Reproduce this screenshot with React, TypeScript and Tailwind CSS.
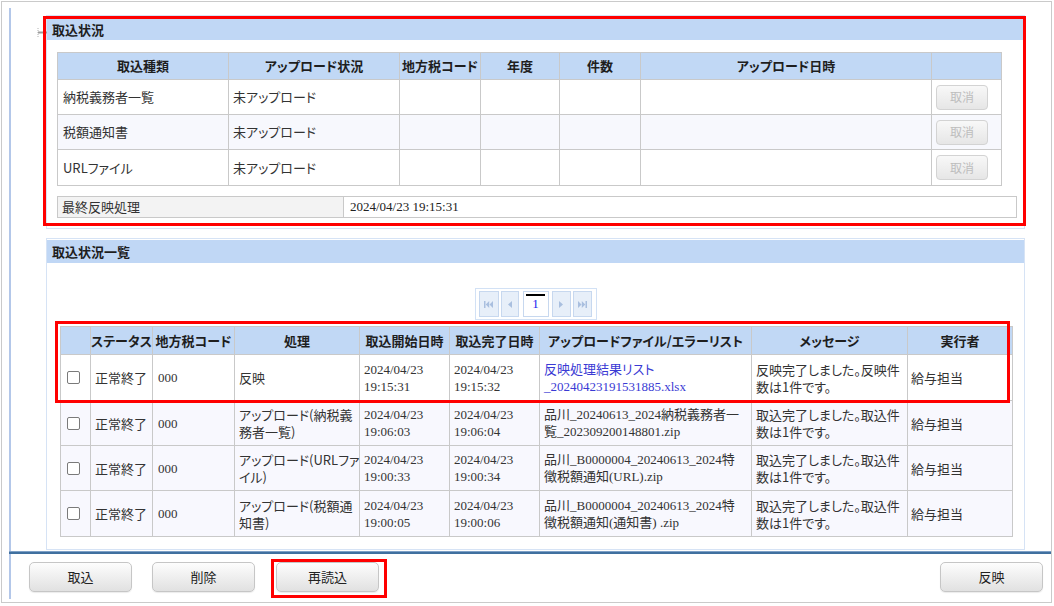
import React from "react";

const SANS = "font-['Noto_Sans_CJK_JP',sans-serif] [font-feature-settings:'palt']";
const SERIF = "font-['Liberation_Serif','Noto_Sans_CJK_JP',serif]";

type UploadRow = { kind: string; status: string };

const uploads: UploadRow[] = [
  { kind: "納税義務者一覧", status: "未アップロード" },
  { kind: "税額通知書", status: "未アップロード" },
  { kind: "URLファイル", status: "未アップロード" },
];

const uploadHeads = ["取込種類", "アップロード状況", "地方税コード", "年度", "件数", "アップロード日時", ""];
const uploadCols = ["w-[171px]", "w-[171px]", "w-[81px]", "w-[79px]", "w-[81px]", "w-[291px]", "w-[70px]"];
const uploadRowH = ["h-[35px]", "h-[35px]", "h-[36px]"];

type HistoryRow = {
  status: string;
  code: string;
  proc: string[];
  start: string[];
  end: string[];
  file: string[];
  link?: boolean;
  msg: string[];
  user: string;
};

const history: HistoryRow[] = [
  {
    status: "正常終了",
    code: "000",
    proc: ["反映"],
    start: ["2024/04/23", "19:15:31"],
    end: ["2024/04/23", "19:15:32"],
    file: ["反映処理結果リスト", "_20240423191531885.xlsx"],
    link: true,
    msg: ["反映完了しました。反映件", "数は1件です。"],
    user: "給与担当",
  },
  {
    status: "正常終了",
    code: "000",
    proc: ["アップロード(納税義", "務者一覧)"],
    start: ["2024/04/23", "19:06:03"],
    end: ["2024/04/23", "19:06:04"],
    file: ["品川_20240613_2024納税義務者一", "覧_202309200148801.zip"],
    msg: ["取込完了しました。取込件", "数は1件です。"],
    user: "給与担当",
  },
  {
    status: "正常終了",
    code: "000",
    proc: ["アップロード(URLファ", "イル)"],
    start: ["2024/04/23", "19:00:33"],
    end: ["2024/04/23", "19:00:34"],
    file: ["品川_B0000004_20240613_2024特", "徴税額通知(URL).zip"],
    msg: ["取込完了しました。取込件", "数は1件です。"],
    user: "給与担当",
  },
  {
    status: "正常終了",
    code: "000",
    proc: ["アップロード(税額通", "知書)"],
    start: ["2024/04/23", "19:00:05"],
    end: ["2024/04/23", "19:00:06"],
    file: ["品川_B0000004_20240613_2024特", "徴税額通知(通知書) .zip"],
    msg: ["取込完了しました。取込件", "数は1件です。"],
    user: "給与担当",
  },
];

const historyHeads = ["", "ステータス", "地方税コード", "処理", "取込開始日時", "取込完了日時", "アップロードファイル/エラーリスト", "メッセージ", "実行者"];
const historyCols = ["w-[30px]", "w-[62px]", "w-[82px]", "w-[125px]", "w-[90px]", "w-[90px]", "w-[212px]", "w-[156px]", "w-[105px]"];
const historyRowH = ["h-[46px]", "h-[45px]", "h-[45px]", "h-[46px]"];

function Lines({ lines }: { lines: string[] }) {
  return (
    <>
      {lines.map((l, i) => (
        <span key={i} className="block whitespace-nowrap">
          {l}
        </span>
      ))}
    </>
  );
}

function PanelHeader({ title, h }: { title: string; h: string }) {
  return (
    <div className={`${h} bg-[#c0d7f5] pl-[5px] flex items-center text-[13px] font-bold text-[#1e1e1e]`}>{title}</div>
  );
}

function PagerIcon({ dir, end }: { dir: "l" | "r"; end?: boolean }) {
  const flip = dir === "r" ? "scale(-1,1)" : undefined;
  if (end) {
    return (
      <svg width="9" height="7" viewBox="0 0 9 7" style={{ transform: flip }}>
        <rect x="0" y="0" width="1.5" height="7" fill="#a9bfdf" />
        <path d="M5.2 0 L1.7 3.5 L5.2 7Z M9 0 L5.5 3.5 L9 7Z" fill="#a9bfdf" />
      </svg>
    );
  }
  return (
    <svg width="4" height="7" viewBox="0 0 4 7" style={{ transform: flip }}>
      <path d="M4 0 L0 3.5 L4 7Z" fill="#a9bfdf" />
    </svg>
  );
}

function Pager() {
  const btn = "h-[26px] bg-[#e7eff9] border border-[#c7d8ef] flex items-center justify-center";
  return (
    <div className="mx-auto mt-[25px] w-[122px] h-[32px] border border-[#d2e1f5] flex items-center pl-[3px]">
      <div className={`${btn} w-[20px]`}>
        <PagerIcon dir="l" end />
      </div>
      <div className={`${btn} w-[18px] ml-[2px]`}>
        <PagerIcon dir="l" />
      </div>
      <div className="ml-[4px] w-[26px] h-[26px] bg-white border border-[#c7d8ef] flex flex-col">
        <div className="mt-[2px] ml-[2px] mr-[3px] h-[2px] bg-black" />
        <div className={`${SERIF} text-[13px] leading-[16px] text-[#1c1cf0] text-center`}>1</div>
      </div>
      <div className={`${btn} w-[19px] ml-[3px]`}>
        <PagerIcon dir="r" />
      </div>
      <div className={`${btn} w-[19px] ml-[2px]`}>
        <PagerIcon dir="r" end />
      </div>
    </div>
  );
}

function FooterButton({ label, className = "" }: { label: string; className?: string }) {
  return (
    <button
      className={`w-[103px] h-[30px] rounded-[5px] border border-[#c6c6c6] bg-linear-to-b from-[#fdfdfd] to-[#e1e1e1] shadow-[0_1px_1px_rgba(0,0,0,0.08)] text-[13px] text-[#222] ${className}`}
    >
      {label}
    </button>
  );
}

export default function App() {
  return (
    <div className={`relative w-[1054px] h-[606px] bg-white overflow-hidden ${SANS} text-[13px] text-[#333]`}>
      <div className="ml-[1px] mt-[1px] w-[1051px] h-[602px] border border-[#cacaca] flex">
        <div className="w-[7px]" />
        <div className="w-[2px] mt-[6px] mb-[3px] bg-[#b3c7e9]" />

        <div className="flex-1 flex flex-col">
          {/* 取込状況 */}
          <section className="ml-[35px] mt-[13px] w-[979px] h-[214px] border border-[#d6e3f5] pt-[3px] flex flex-col">
            <PanelHeader title="取込状況" h="h-[21px]" />
            <table className="ml-[10px] mt-[12px] w-[944px] table-fixed border-collapse">
              <colgroup>
                {uploadCols.map((c, i) => (
                  <col key={i} className={c} />
                ))}
              </colgroup>
              <thead>
                <tr className="h-[27px] bg-[#c1d8f5]">
                  {uploadHeads.map((h, i) => (
                    <th key={i} className="border border-[#c9c9c9] font-bold text-[#1e1e1e] text-center p-0">
                      {h}
                    </th>
                  ))}
                </tr>
              </thead>
              <tbody>
                {uploads.map((r, i) => (
                  <tr key={r.kind} className={`${uploadRowH[i]} ${i === 1 ? "bg-[#f7f8fd]" : "bg-white"}`}>
                    <td className="border border-[#c9c9c9] pl-[5px]">{r.kind}</td>
                    <td className="border border-[#c9c9c9] pl-[4px]">{r.status}</td>
                    <td className="border border-[#c9c9c9]" />
                    <td className="border border-[#c9c9c9]" />
                    <td className="border border-[#c9c9c9]" />
                    <td className="border border-[#c9c9c9]" />
                    <td className="border border-[#c9c9c9] pl-[4px]">
                      <button
                        disabled
                        className="w-[52px] h-[25px] rounded-[4px] border border-[#d3d3d3] bg-linear-to-b from-[#f8f8f8] to-[#e6e6e6] text-[12px] text-[#bdbdbd]"
                      >
                        取消
                      </button>
                    </td>
                  </tr>
                ))}
              </tbody>
            </table>

            <div className="ml-[10px] mt-[10px] w-[960px] h-[22px] border border-[#c9c9c9] flex">
              <div className="w-[286px] bg-[#f3f3f3] border-r border-[#c9c9c9] pl-[4px] flex items-center">最終反映処理</div>
              <div className={`pl-[6px] flex items-center ${SERIF} text-[#222]`}>2024/04/23 19:15:31</div>
            </div>
          </section>

          {/* 取込状況一覧 */}
          <section className="ml-[35px] mt-[9px] w-[979px] h-[312px] border border-[#d6e3f5] pt-[1px] flex flex-col">
            <PanelHeader title="取込状況一覧" h="h-[23px]" />
            <Pager />
            <table className="ml-[13px] mt-[6px] w-[952px] table-fixed border-collapse">
              <colgroup>
                {historyCols.map((c, i) => (
                  <col key={i} className={c} />
                ))}
              </colgroup>
              <thead>
                <tr className="h-[28px] bg-[#c1d8f5]">
                  {historyHeads.map((h, i) => (
                    <th key={i} className="border border-[#c9c9c9] font-bold text-[#1e1e1e] text-center p-0 whitespace-nowrap">
                      {h}
                    </th>
                  ))}
                </tr>
              </thead>
              <tbody className="leading-[17px]">
                {history.map((r, i) => (
                  <tr key={i} className={`${historyRowH[i]} ${i === 0 ? "bg-white" : "bg-[#f8f8fe]"}`}>
                    <td className="border border-[#c9c9c9] pl-[6px]">
                      <input
                        type="checkbox"
                        className="appearance-none block w-[13px] h-[13px] border border-[#7a7a7a] rounded-[2px] bg-white"
                      />
                    </td>
                    <td className="border border-[#c9c9c9] pl-[4px]">{r.status}</td>
                    <td className={`border border-[#c9c9c9] pl-[5px] ${SERIF}`}>{r.code}</td>
                    <td className="border border-[#c9c9c9] pl-[4px]">
                      <Lines lines={r.proc} />
                    </td>
                    <td className={`border border-[#c9c9c9] pl-[4px] ${SERIF}`}>
                      <Lines lines={r.start} />
                    </td>
                    <td className={`border border-[#c9c9c9] pl-[4px] ${SERIF}`}>
                      <Lines lines={r.end} />
                    </td>
                    <td className={`border border-[#c9c9c9] pl-[4px] ${SERIF} ${r.link ? "text-[#3a3ad4]" : ""}`}>
                      <Lines lines={r.file} />
                    </td>
                    <td className="border border-[#c9c9c9] pl-[4px]">
                      <Lines lines={r.msg} />
                    </td>
                    <td className="border border-[#c9c9c9] pl-[3px]">{r.user}</td>
                  </tr>
                ))}
              </tbody>
            </table>
          </section>

          <div className="-ml-[2px] mt-[1px] h-[3px] bg-[#40709f] border-t border-[#7da0c6]" />

          <div className="mt-[8px] pl-[18px] pr-[8px] flex items-center">
            <FooterButton label="取込" />
            <FooterButton label="削除" className="ml-[20px]" />
            <FooterButton label="再読込" className="ml-[21px]" />
            <FooterButton label="反映" className="ml-auto" />
          </div>
        </div>
      </div>

      {/* handle mark beside the first panel */}
      <svg className="absolute left-[37px] top-[28px]" width="11" height="10" viewBox="0 0 11 10">
        <line x1="1" y1="0" x2="1" y2="10" stroke="#b0b0b0" strokeWidth="1" strokeDasharray="1 1" />
        <line x1="1" y1="4.5" x2="10" y2="4.5" stroke="#9c9c9c" strokeWidth="2" />
      </svg>

      {/* highlight frames */}
      <div className="absolute left-[43px] top-[16px] w-[983px] h-[210px] border-[3px] border-[#ff0000]" />
      <div className="absolute left-[55px] top-[321px] w-[955px] h-[82px] border-[3px] border-[#ff0000]" />
      <div className="absolute left-[271px] top-[559px] w-[116px] h-[39px] border-[3px] border-[#ff0000]" />
    </div>
  );
}
